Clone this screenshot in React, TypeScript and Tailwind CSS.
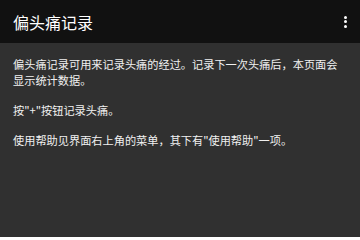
export default function App() {
  return (
    <div
      className="flex h-[237px] w-[360px] flex-col bg-[#303030] text-[#f0f0f0]"
      style={{ fontFamily: '"Noto Sans CJK SC", "Noto Sans", sans-serif' }}
    >
      {/* Action bar */}
      <div className="flex h-[43px] shrink-0 items-center justify-between bg-[#111111] pl-[13px] pr-[13px]">
        <h1 className="text-[16px] leading-none text-white">偏头痛记录</h1>
        <div className="flex flex-col items-center gap-[1.5px]" aria-label="更多选项">
          <span className="h-[3px] w-[3px] rounded-full bg-white" />
          <span className="h-[3px] w-[3px] rounded-full bg-white" />
          <span className="h-[3px] w-[3px] rounded-full bg-white" />
        </div>
      </div>

      {/* Content */}
      <div className="flex flex-col gap-[14px] px-[13px] pt-[13px] text-[11.2px] leading-[16px]">
        <p>偏头痛记录可用来记录头痛的经过。记录下一次头痛后，本页面会显示统计数据。</p>
        <p>按"+"按钮记录头痛。</p>
        <p>使用帮助见界面右上角的菜单，其下有"使用帮助"一项。</p>
      </div>
    </div>
  )
}
